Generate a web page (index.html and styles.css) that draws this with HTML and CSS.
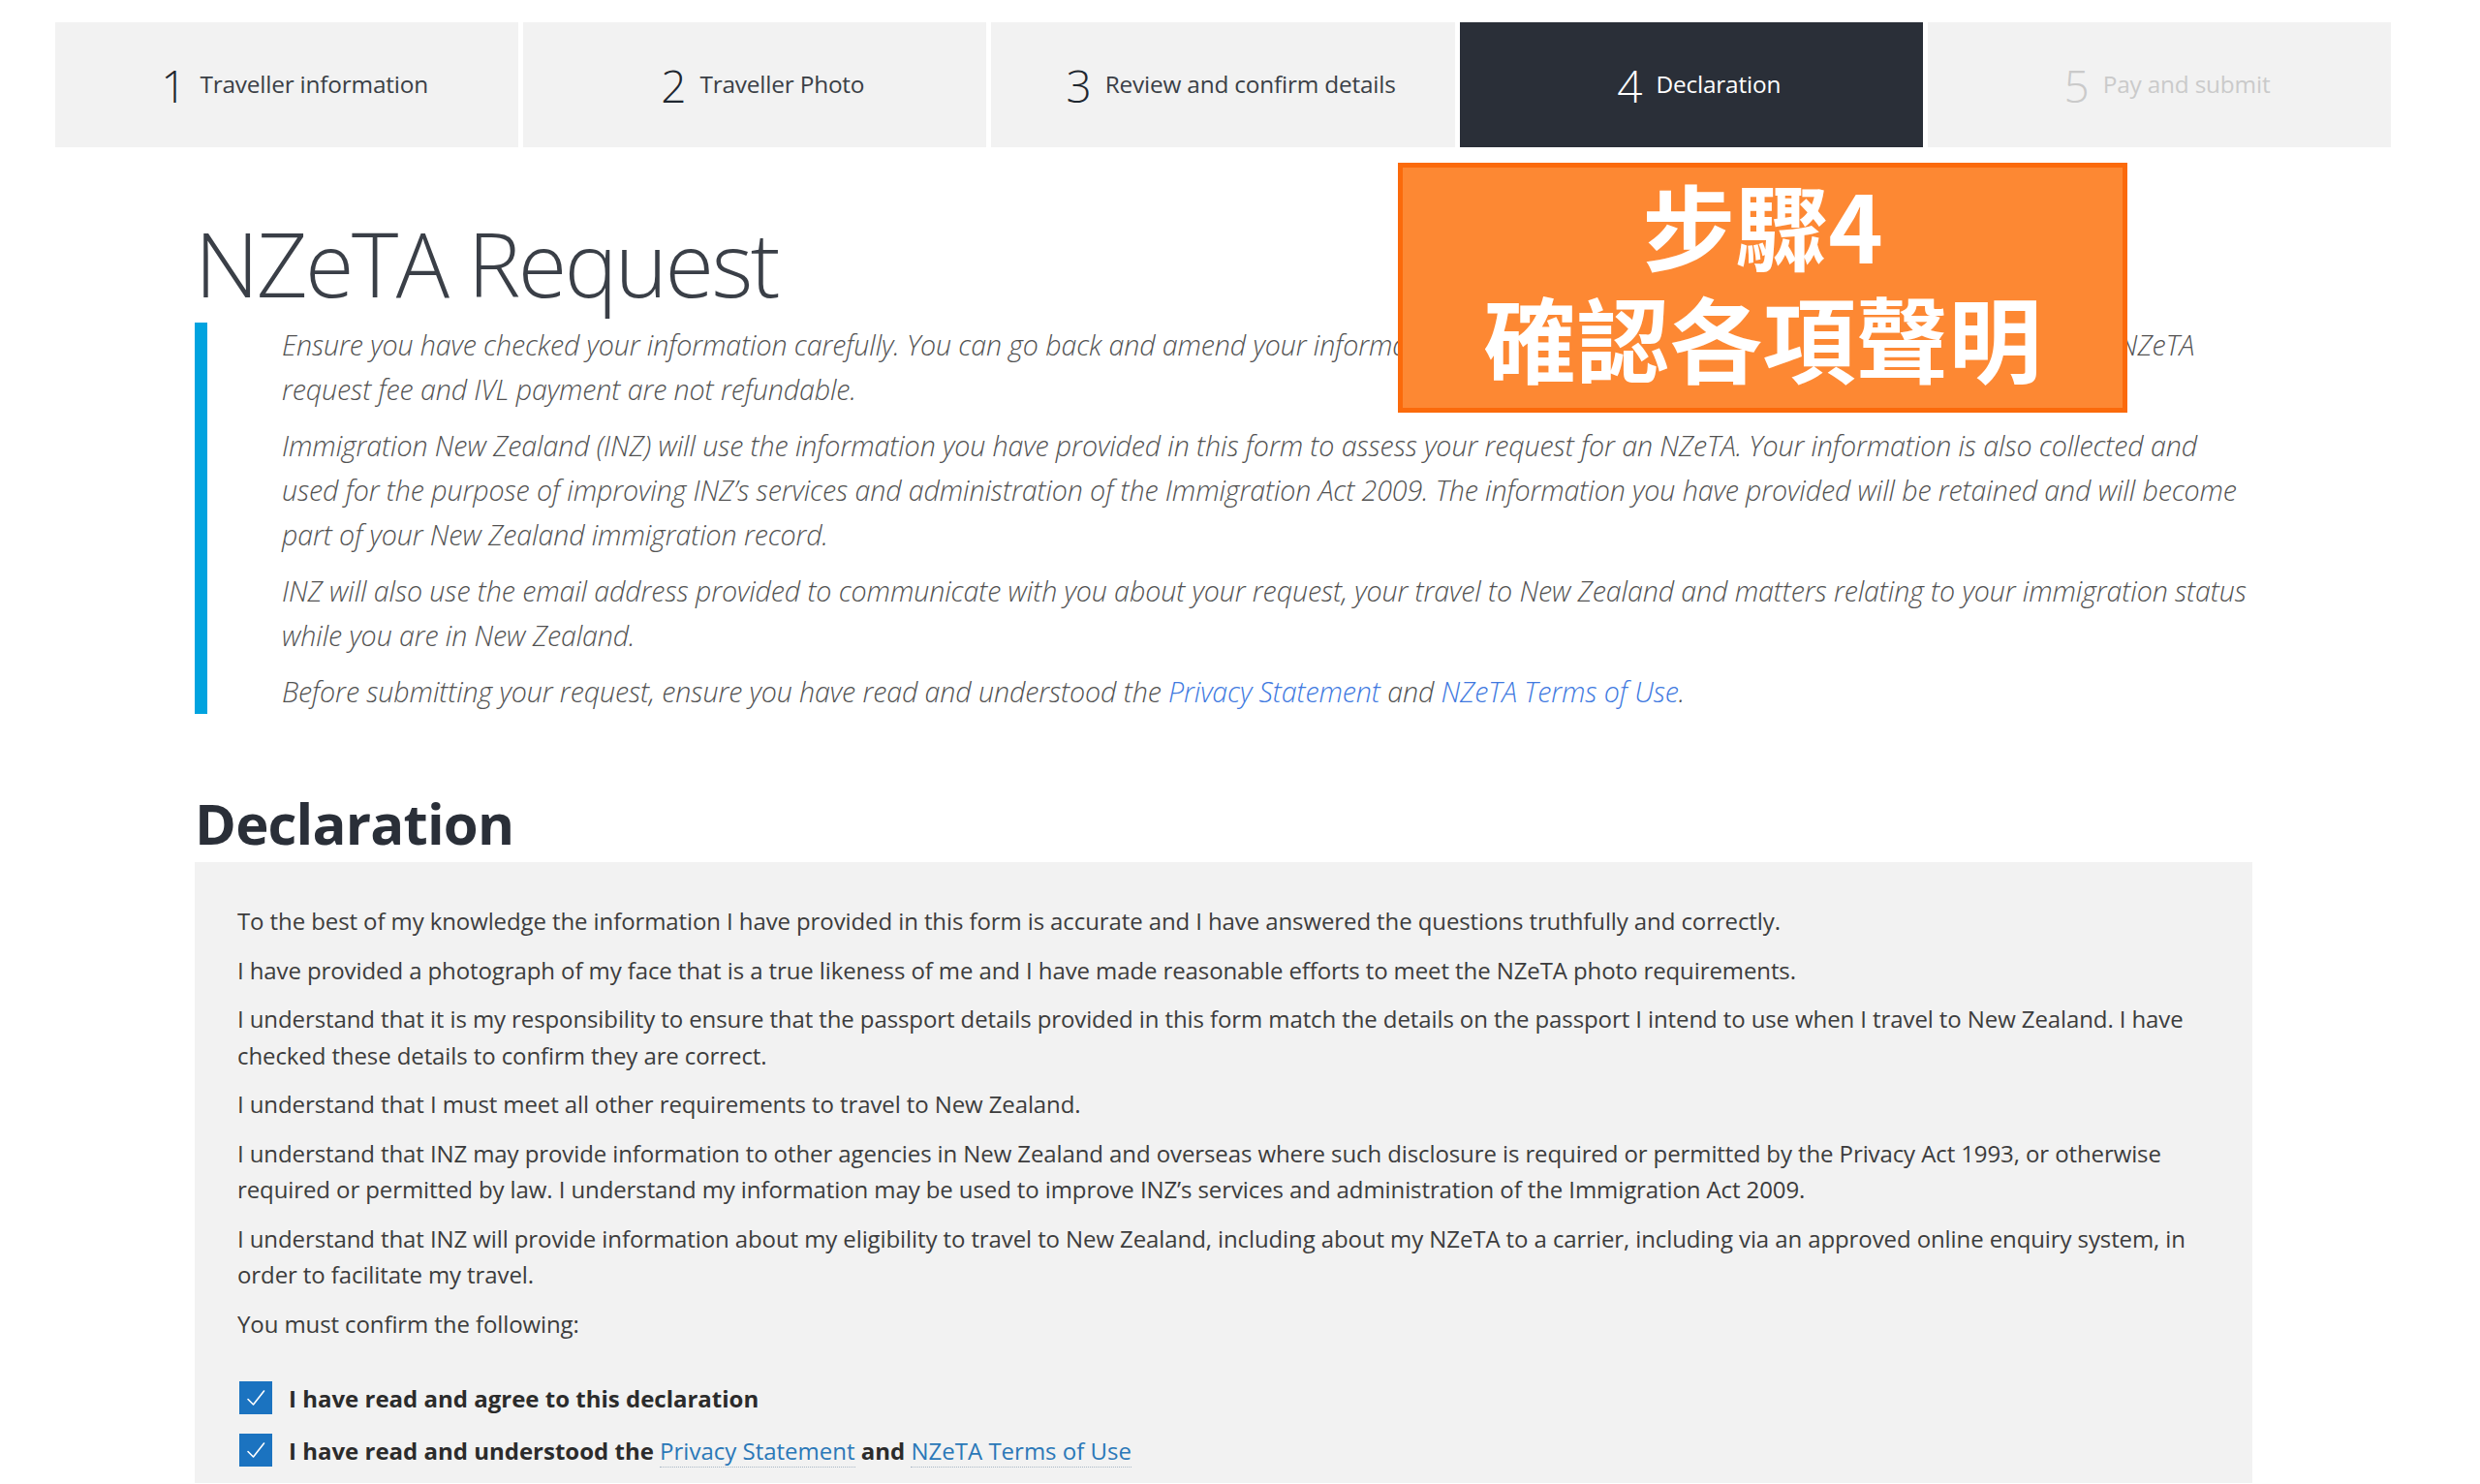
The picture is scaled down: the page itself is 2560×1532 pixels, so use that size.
FILE: index.html
```html
<!DOCTYPE html>
<html lang="en">
<head>
<meta charset="utf-8">
<title>NZeTA Request – Declaration</title>
<link rel="stylesheet" href="styles.css">
</head>
<body>
<nav class="steps">
  <div class="step"><span class="step-num">1</span><span class="step-label">Traveller information</span></div>
  <div class="step"><span class="step-num">2</span><span class="step-label">Traveller Photo</span></div>
  <div class="step"><span class="step-num">3</span><span class="step-label">Review and confirm details</span></div>
  <div class="step step-active"><span class="step-num">4</span><span class="step-label">Declaration</span></div>
  <div class="step step-disabled"><span class="step-num">5</span><span class="step-label">Pay and submit</span></div>
</nav>

<main class="content">
  <h1 class="page-title">NZeTA Request</h1>
  <div class="notice">
    <p>Ensure you have checked your information carefully. You can go back and amend your information at any time before you submit your NZeTA request. The NZeTA request fee and IVL payment are not refundable.</p>
    <p>Immigration New Zealand (INZ) will use the information you have provided in this form to assess your request for an NZeTA. Your information is also collected and used for the purpose of improving INZ’s services and administration of the Immigration Act 2009. The information you have provided will be retained and will become part of your New Zealand immigration record.</p>
    <p>INZ will also use the email address provided to communicate with you about your request, your travel to New Zealand and matters relating to your immigration status while you are in New Zealand.</p>
    <p>Before submitting your request, ensure you have read and understood the <a class="notice-link" href="#">Privacy Statement</a> and <a class="notice-link" href="#">NZeTA Terms of Use</a>.</p>
  </div>

  <h2 class="section-title">Declaration</h2>
  <section class="panel">
    <p>To the best of my knowledge the information I have provided in this form is accurate and I have answered the questions truthfully and correctly.</p>
    <p>I have provided a photograph of my face that is a true likeness of me and I have made reasonable efforts to meet the NZeTA photo requirements.</p>
    <p>I understand that it is my responsibility to ensure that the passport details provided in this form match the details on the passport I intend to use when I travel to New Zealand. I have checked these details to confirm they are correct.</p>
    <p>I understand that I must meet all other requirements to travel to New Zealand.</p>
    <p>I understand that INZ may provide information to other agencies in New Zealand and overseas where such disclosure is required or permitted by the Privacy Act 1993, or otherwise required or permitted by law. I understand my information may be used to improve INZ’s services and administration of the Immigration Act 2009.</p>
    <p>I understand that INZ will provide information about my eligibility to travel to New Zealand, including about my NZeTA to a carrier, including via an approved online enquiry system, in order to facilitate my travel.</p>
    <p>You must confirm the following:</p>
    <div class="confirm-list">
      <label class="check-row">
        <span class="checkbox"><svg viewBox="0 0 34 34" width="34" height="34"><path d="M9 18.5 L14.5 24 L25.5 10" fill="none" stroke="#fff" stroke-width="1.6" stroke-linecap="round" stroke-linejoin="round"/></svg></span>
        <span class="check-label">I have read and agree to this declaration</span>
      </label>
      <label class="check-row">
        <span class="checkbox"><svg viewBox="0 0 34 34" width="34" height="34"><path d="M9 18.5 L14.5 24 L25.5 10" fill="none" stroke="#fff" stroke-width="1.6" stroke-linecap="round" stroke-linejoin="round"/></svg></span>
        <span class="check-label">I have read and understood the <a class="check-link" href="#">Privacy Statement</a> and <a class="check-link" href="#">NZeTA Terms of Use</a></span>
      </label>
    </div>
  </section>
</main>

<div class="callout">步驟4<br>確認各項聲明</div>
</body>
</html>
```

FILE: styles.css
```css
html, body {
  margin: 0;
  padding: 0;
  background: #ffffff;
}

body {
  font-family: "Open Sans", "Noto Sans", "Liberation Sans", sans-serif;
  color: #333;
  position: relative;
  height: 1532px;
  overflow: hidden;
}

/* ---------- step tabs ---------- */
.steps {
  display: flex;
  gap: 5px;
  margin: 23px 92px 0 57px;
  height: 129px;
}

.step {
  flex: 1;
  background: #f2f2f2;
  display: flex;
  align-items: center;
  justify-content: center;
  gap: 14px;
  padding-left: 16px;
  color: #3a3f46;
}

.step-num {
  font-size: 46px;
  font-weight: 300;
  line-height: 1;
  color: #1f2730;
}

.step-label {
  font-size: 24.4px;
  line-height: 1;
  letter-spacing: -0.2px;
}

.step-active {
  background: #2a2f38;
  color: #ffffff;
}
.step-active .step-num { color: #ffffff; }

.step-disabled { color: #cacaca; }
.step-disabled .step-num { color: #cacaca; }

/* ---------- content ---------- */
.content {
  margin-left: 201px;
  width: 2124px;
}

.page-title {
  margin: 74px 0 15px;
  font-size: 92px;
  font-weight: 300;
  line-height: 1;
  letter-spacing: -2.6px;
  color: #3a3f47;
}

.notice {
  border-left: 13px solid #00a3df;
  padding-left: 77px;
}

.notice p {
  margin: 0 0 12px;
  font-size: 28.6px;
  font-style: italic;
  font-weight: 300;
  line-height: 46px;
  color: #525252;
  letter-spacing: -0.1px;
}
.notice p:last-child { margin-bottom: 0; }

.notice-link {
  color: #4079df;
  text-decoration: none;
}

.section-title {
  margin: 84px 0 11px;
  font-size: 58px;
  font-weight: 700;
  line-height: 1;
  color: #2a2f38;
  letter-spacing: -0.8px;
}

.panel {
  background: #f2f2f2;
  padding: 42px 44px 14px;
}

.panel p {
  margin: 0 0 13px;
  font-size: 24px;
  line-height: 37.5px;
  color: #3c3c3c;
  letter-spacing: -0.1px;
}

.confirm-list {
  display: flex;
  flex-direction: column;
  gap: 14px;
  margin-top: 38px;
}

.check-row {
  display: flex;
  align-items: center;
  gap: 17px;
  height: 40px;
}

.checkbox {
  width: 34px;
  height: 34px;
  margin-left: 2px;
  background: #1b73c0;
  display: flex;
}

.check-label {
  font-size: 24px;
  font-weight: 700;
  color: #2b2b2b;
}

.check-link {
  font-weight: 400;
  color: #2a78b8;
  text-decoration: none;
  border-bottom: 1px dotted #a9b7c4;
}

/* ---------- annotation overlay ---------- */
.callout {
  position: absolute;
  left: 1443px;
  top: 168px;
  width: 753px;
  height: 258px;
  box-sizing: border-box;
  padding-bottom: 16px;
  border: 5px solid #fb6a0b;
  background: #fd8833;
  color: #ffffff;
  font-family: "Noto Sans CJK TC", "Noto Sans CJK SC", sans-serif;
  font-weight: 700;
  font-size: 96px;
  line-height: 116px;
  display: flex;
  align-items: center;
  justify-content: center;
  text-align: center;
}
```
